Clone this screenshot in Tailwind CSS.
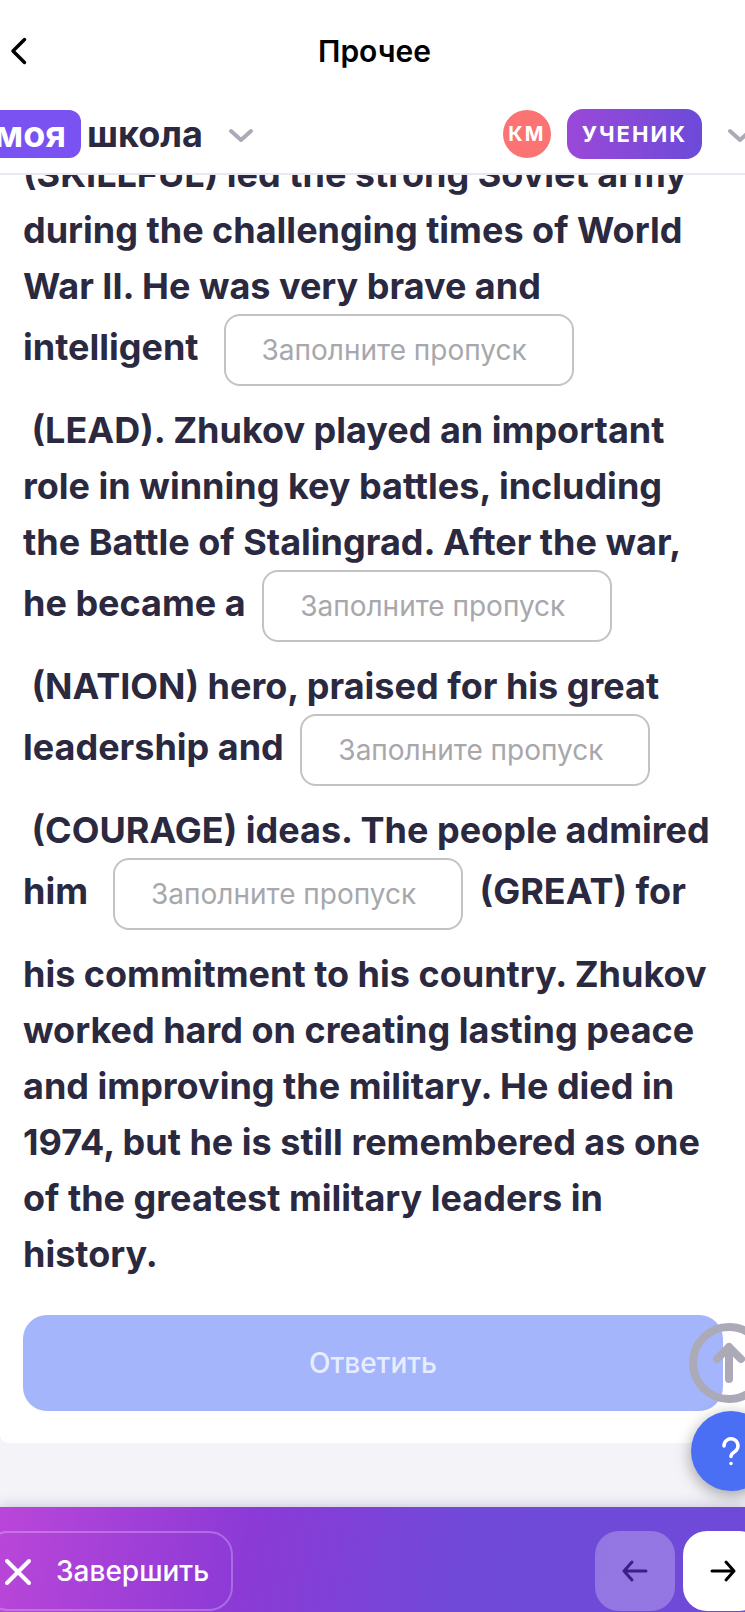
<!DOCTYPE html>
<html lang="ru">
<head>
    <meta charset="UTF-8">
    <meta name="viewport" content="width=device-width, initial-scale=1.0">
    <title>Прочее</title>
    <script src="https://cdn.jsdelivr.net/npm/@tailwindcss/browser@4"></script>
</head>
<body class="bg-[#f3f3f8] font-['Inter',sans-serif] text-[#2b293f] overflow-x-hidden">
    <div class="relative min-h-screen flex flex-col overflow-hidden">

        <header class="relative z-10 bg-white border-b-2 border-[#e8e8f0]">
            <div class="relative h-[101px] pl-1 flex items-center justify-center">
                <button type="button" aria-label="Назад" class="absolute left-2 top-9 h-8 w-6">
                    <svg class="w-6 h-8" viewBox="0 0 24 32" fill="none" stroke="#000" stroke-width="3.5" stroke-linecap="round" stroke-linejoin="round"><path d="M16.500 3.500 5 15l11.500 11.500"/></svg>
                </button>
                <h1 class="text-[30px] leading-9 font-semibold text-black">Прочее</h1>
            </div>
            <div class="h-[72px] pb-1.5 flex items-center justify-between">
                <a href="#" class="flex items-center text-[36px] leading-[48px] font-bold">
                    <span class="-ml-5 pl-[14px] pr-[15px] rounded-xl bg-[#7a52f1] text-white">моя</span>
                    <span class="ml-[6px]">школа</span>
                    <svg class="ml-6 mt-1 w-7 h-4" viewBox="0 0 28 16" fill="none" stroke="#abaab6" stroke-width="4" stroke-linecap="round" stroke-linejoin="round"><path d="M4 3l10 9 10-9"/></svg>
                </a>
                <button type="button" class="-mr-[9px] flex items-center font-bold text-white">
                    <span class="size-12 rounded-full bg-[#fc7374] flex items-center justify-center text-[20px] tracking-[2px]">КМ</span>
                    <span class="ml-4 h-[50px] px-[15px] rounded-2xl bg-linear-to-r from-[#9a48d8] to-[#6c4ad8] flex items-center text-[22px] tracking-[2px]">УЧЕНИК</span>
                    <svg class="ml-6 mt-1 w-7 h-4" viewBox="0 0 28 16" fill="none" stroke="#abaab6" stroke-width="4" stroke-linecap="round" stroke-linejoin="round"><path d="M4 3l10 9 10-9"/></svg>
                </button>
            </div>
        </header>

        <main class="-mt-[29px] pl-[23px] pr-[22px] pb-8 bg-white rounded-b-lg">
            <p class="text-[36px] leading-[56px] font-bold">
                (SKILLFUL) led the strong Soviet army during the challenging times of World War II. He was very brave and intelligent&nbsp;
                <input type="text" aria-label="LEAD" placeholder="Заполните пропуск" class="w-[350px] h-[72px] mx-2 mb-4 px-9 border-2 border-[#c3c3c5] rounded-2xl bg-white text-[28px] font-normal placeholder:text-[#a7a7ac]"><wbr>&nbsp;(LEAD). Zhukov played an important role in winning key battles, including the Battle of Stalingrad. After the war, he became a
                <input type="text" aria-label="NATION" placeholder="Заполните пропуск" class="w-[350px] h-[72px] mx-2 mb-4 px-9 border-2 border-[#c3c3c5] rounded-2xl bg-white text-[28px] font-normal placeholder:text-[#a7a7ac]"><wbr>&nbsp;(NATION) hero, praised for his great leadership and
                <input type="text" aria-label="COURAGE" placeholder="Заполните пропуск" class="w-[350px] h-[72px] mx-2 mb-4 px-9 border-2 border-[#c3c3c5] rounded-2xl bg-white text-[28px] font-normal placeholder:text-[#a7a7ac]"><wbr>&nbsp;(COURAGE) ideas. The people admired him&nbsp;
                <input type="text" aria-label="GREAT" placeholder="Заполните пропуск" class="w-[350px] h-[72px] mx-2 mb-4 px-9 border-2 border-[#c3c3c5] rounded-2xl bg-white text-[28px] font-normal placeholder:text-[#a7a7ac]"><wbr>&nbsp;(GREAT) for his commitment to his country. Zhukov worked hard on creating lasting peace and improving the military. He died in 1974, but he is still remembered as one of the greatest military leaders in history.
            </p>
            <button type="button" class="mt-[33px] w-full h-24 rounded-3xl bg-[#a5b5fb] text-[28px] font-medium text-[#e8edfe]">Ответить</button>
        </main>

        <!-- floating buttons -->
        <button type="button" aria-label="Наверх" class="absolute -right-6 bottom-[209px] size-20 rounded-full border-8 border-[#abaab6] flex items-center justify-center">
            <svg class="w-10 h-12 shrink-0" viewBox="0 0 40 48" fill="none" stroke="#abaab6" stroke-width="8" stroke-linecap="round" stroke-linejoin="round"><path d="M20 40V8M8 20 20 8l12 12"/></svg>
        </button>
        <button type="button" aria-label="Помощь" class="absolute z-10 -right-[26px] bottom-[121px] size-20 rounded-full bg-[#4a6ff5] shadow-[0_4px_16px_rgba(0,0,0,0.35)] flex items-center justify-center">
            <svg class="w-6 h-8" viewBox="0 0 24 32" fill="none" stroke="#fff" stroke-width="3.5" stroke-linecap="round" stroke-linejoin="round"><path d="M5 11a7 7 0 1 1 11 5.500c-2.500 1.500-4 2.500-4 5"/><path d="M12 28.500h.01"/></svg>
        </button>

        <footer class="mt-auto h-[105px] pt-6 flex items-start bg-[linear-gradient(100deg,#ba46d9_0%,#8c3ad6_33%,#7049d9_62%,#6f4ad8_100%)] shadow-[0_-2px_12px_rgba(60,40,120,0.2)]">
            <button type="button" class="-ml-4 h-20 pl-[18px] pr-[22px] flex items-center gap-6 border-2 border-white/25 rounded-3xl text-[28px] font-medium text-white">
                <svg class="w-7 h-7 mt-0.5" viewBox="0 0 28 28" fill="none" stroke="#fff" stroke-width="4" stroke-linecap="round"><path d="M3 3l22 22M25 3 3 25"/></svg>
                Завершить
            </button>
            <button type="button" aria-label="Предыдущее задание" class="ml-auto size-20 shrink-0 rounded-3xl bg-white/25 flex items-center justify-center">
                <svg class="w-7 h-7" viewBox="0 0 28 28" fill="none" stroke="#3a1f86" stroke-width="3" stroke-linecap="round" stroke-linejoin="round"><path d="M25 14H3M11 5 3 14l8 9"/></svg>
            </button>
            <button type="button" aria-label="Следующее задание" class="ml-2 -mr-[18px] size-20 shrink-0 rounded-3xl bg-white flex items-center justify-center">
                <svg class="w-7 h-7" viewBox="0 0 28 28" fill="none" stroke="#000" stroke-width="3" stroke-linecap="round" stroke-linejoin="round"><path d="M3 14h22M17 5l8 9-8 9"/></svg>
            </button>
        </footer>
    </div>
</body>
</html>
